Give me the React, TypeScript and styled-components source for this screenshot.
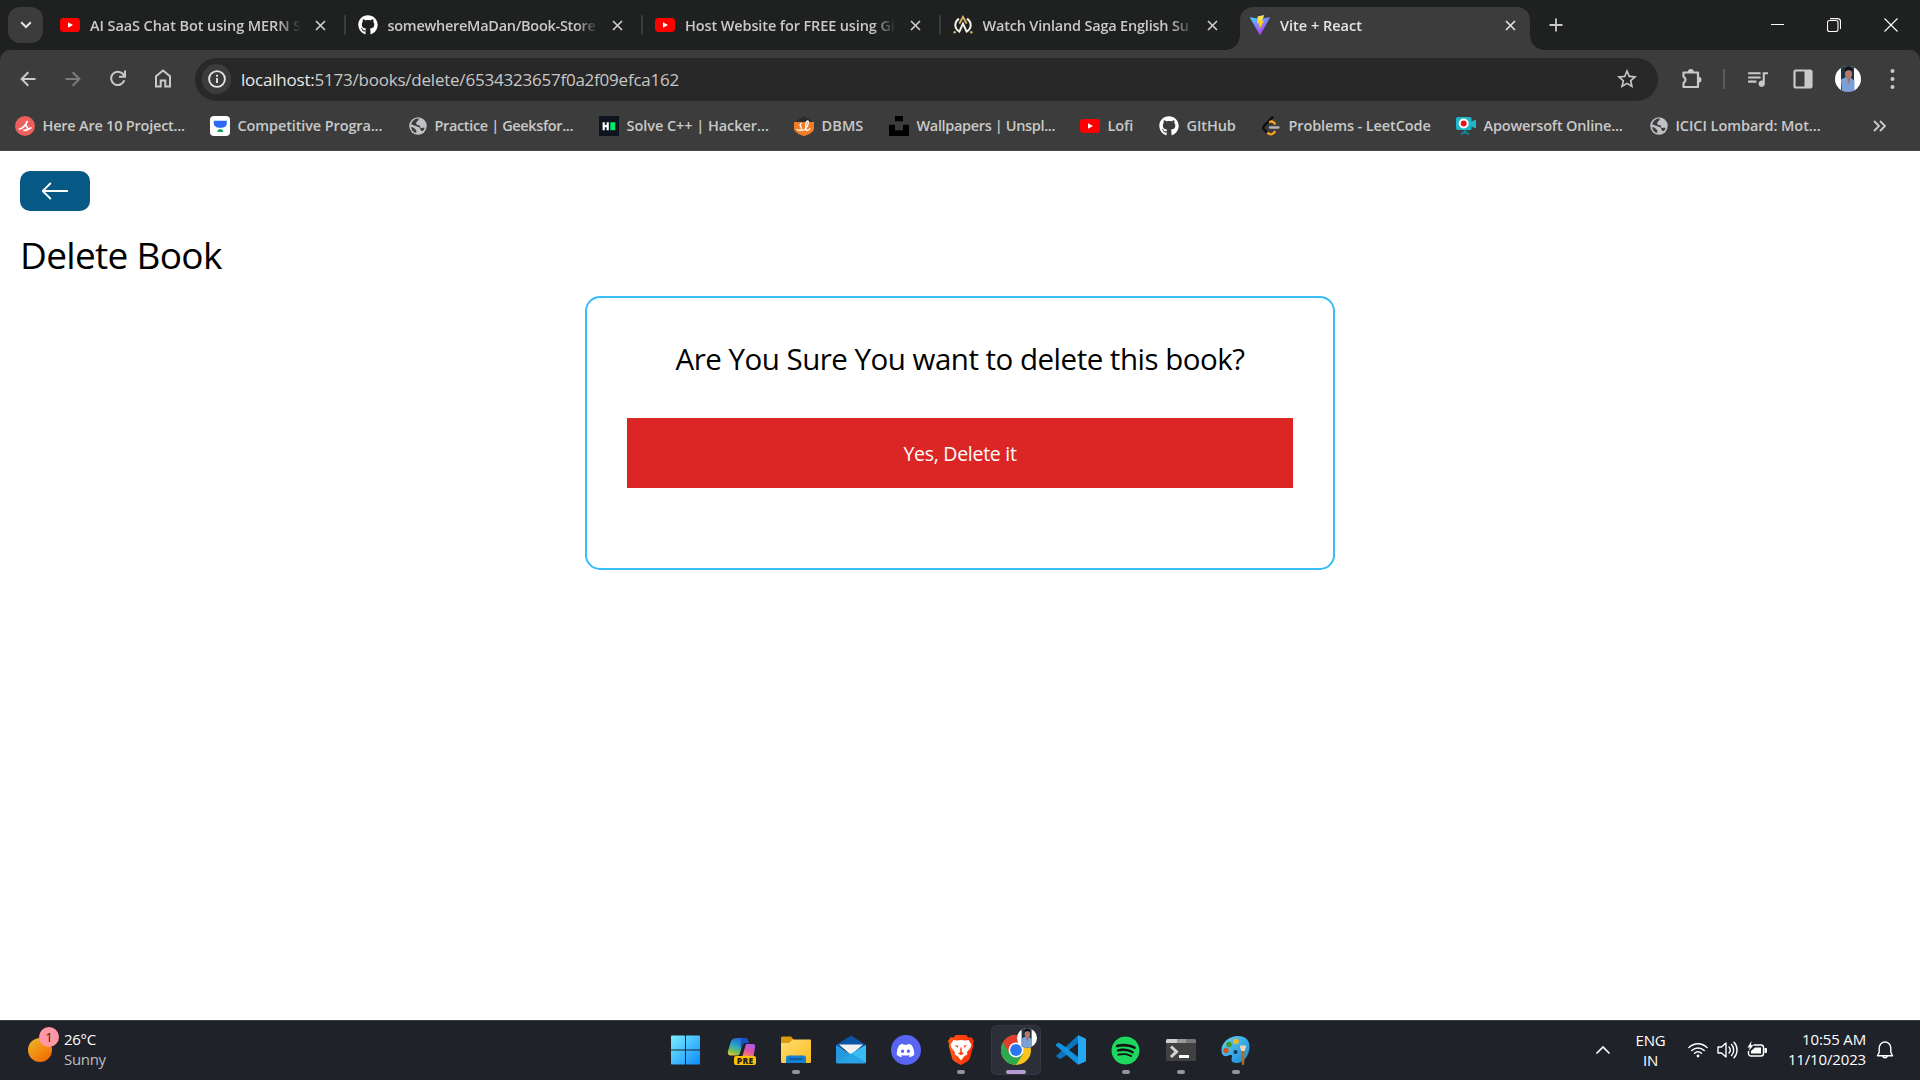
import React from "react";
import styled, { createGlobalStyle } from "styled-components";
import { BsArrowLeft } from "react-icons/bs";
import { FaGithub, FaDiscord, FaSpotify } from "react-icons/fa";
import { MdOutlineStarBorder, MdQueueMusic } from "react-icons/md";

const GlobalStyle = createGlobalStyle`
  * { box-sizing: border-box; }
  body {
    margin: 0;
    background: #fff;
    font-family: "Open Sans", "Noto Sans", sans-serif;
    overflow: hidden;
  }
  svg { display: block; flex: none; }
`;

const Screen = styled.div`
  display: flex;
  flex-direction: column;
  width: 1920px;
  height: 1080px;
`;

/* ---------- tab strip ---------- */

const TabStrip = styled.header`
  display: flex;
  flex: none;
  height: 50px;
  padding: 7px 0 0 8px;
  background: #1f2120;
`;

const TabSearch = styled.button`
  display: grid;
  place-items: center;
  width: 35px;
  height: 36px;
  margin-right: 7px;
  padding: 0;
  border: 0;
  border-radius: 12px;
  background: #3c3c3c;
`;

const Tab = styled.div<{ $active?: boolean }>`
  position: relative;
  display: flex;
  align-items: center;
  width: ${(p) => (p.$active ? 290 : 297.5)}px;
  height: 43px;
  padding: 0 ${(p) => (p.$active ? 9 : 2)}px 7px 10px;
  border-radius: 13px 13px 0 0;
  background: ${(p) => (p.$active ? "#3c3c3c" : "transparent")};
  color: ${(p) => (p.$active ? "#e6e6e6" : "#c9c9c9")};

  &::before,
  &::after {
    content: "";
    display: ${(p) => (p.$active ? "block" : "none")};
    position: absolute;
    bottom: 0;
    width: 14px;
    height: 14px;
  }
  &::before {
    left: -14px;
    background: radial-gradient(circle at 0 0, transparent 13.5px, #3c3c3c 14px);
  }
  &::after {
    right: -14px;
    background: radial-gradient(circle at 100% 0, transparent 13.5px, #3c3c3c 14px);
  }
`;

const TabTitle = styled.span<{ $tracking: number }>`
  flex: none;
  width: 212px;
  margin-left: 10px;
  padding-top: 2px;
  overflow: hidden;
  font-size: 14.5px;
  font-weight: 600;
  line-height: 20px;
  letter-spacing: ${(p) => p.$tracking}px;
  white-space: nowrap;
  mask-image: linear-gradient(to right, #000 188px, transparent 211px);
`;

const TabClose = styled.span`
  display: grid;
  flex: none;
  place-items: center;
  width: 20px;
  margin-left: 8px;
`;

const TabDivider = styled.span`
  width: 2px;
  height: 20px;
  margin-left: auto;
  border-radius: 1px;
  background: #3c3d3d;
`;

const NewTab = styled.span`
  display: grid;
  place-items: center;
  width: 51px;
  height: 36px;
`;

const WindowControls = styled.div`
  display: flex;
  margin-left: auto;
  height: 36px;
`;

const WindowButton = styled.span`
  display: grid;
  place-items: center;
  width: 57px;
  padding: 0 1px 1px 0;
`;

/* ---------- toolbar ---------- */

const ChromeBody = styled.div`
  flex: none;
  height: 101px;
  background: #1f2120;
`;

const ChromePanel = styled.div`
  display: flex;
  flex-direction: column;
  height: 101px;
  border-radius: 10px 10px 0 0;
  background: #3c3c3c;
  border-bottom: 1px solid #474747;
`;

const Toolbar = styled.div`
  display: flex;
  align-items: center;
  height: 58px;
`;

const NavButtons = styled.div`
  display: flex;
  width: 195px;
  padding-left: 5px;
`;

const ToolButton = styled.span<{ $w: number }>`
  display: grid;
  place-items: center;
  width: ${(p) => p.$w}px;
  height: 40px;
  padding-bottom: 1px;
`;

const Omnibox = styled.div`
  display: flex;
  align-items: center;
  width: 1463px;
  height: 43px;
  padding: 0 19px 0 7px;
  border-radius: 22px;
  background: #282828;
`;

const SiteInfo = styled.span`
  display: grid;
  place-items: center;
  width: 29px;
  height: 30px;
  border-radius: 15px;
  background: #3c3c3c;
`;

const Url = styled.span`
  flex: 1;
  margin-left: 10px;
  color: #c7c7c7;
  font-size: 17px;
  letter-spacing: -0.22px;
  white-space: nowrap;
`;

const UrlHost = styled.span`
  color: #e8e8e8;
`;

const Separator = styled.span`
  width: 2px;
  height: 20px;
  background: #5b5b5b;
`;

const ToolbarEnd = styled.div`
  display: flex;
  align-items: center;
  padding-left: 10px;
`;

const BookmarkBar = styled.nav`
  display: flex;
  align-items: center;
  height: 36px;
  padding-left: 15px;
`;

const Bookmark = styled.span<{ $w: number }>`
  display: flex;
  align-items: center;
  gap: 7.5px;
  width: ${(p) => p.$w}px;
`;

const BookmarkLabel = styled.span<{ $tracking: number }>`
  color: #c9c9c9;
  font-size: 14.5px;
  font-weight: 600;
  line-height: 20px;
  letter-spacing: ${(p) => p.$tracking}px;
  white-space: nowrap;
`;

/* ---------- page ---------- */

const Page = styled.main`
  flex: 1;
  padding: 20px;
  background: #fff;
`;

const BackButton = styled.button`
  display: grid;
  place-items: center;
  width: 70px;
  height: 40px;
  padding: 0;
  border: 0;
  border-radius: 10px;
  background: #075985;
  color: #fff;
`;

const Title = styled.h1`
  margin: 22px 0 19px;
  color: #000;
  font-size: 37px;
  font-weight: 400;
  line-height: 44px;
  letter-spacing: -0.68px;
`;

const Card = styled.section`
  display: flex;
  flex-direction: column;
  align-items: center;
  width: 750px;
  height: 274px;
  margin: 0 auto;
  padding: 40px;
  border: 2px solid #38bdf8;
  border-radius: 15px;
`;

const Question = styled.h3`
  margin: 1px 0 39px;
  color: #000;
  font-size: 29.5px;
  font-weight: 400;
  line-height: 40px;
  letter-spacing: -0.5px;
`;

const DeleteButton = styled.button`
  width: 100%;
  height: 70px;
  padding: 1px 0 0;
  border: 0;
  background: #dc2626;
  color: #fff;
  font-family: inherit;
  font-size: 19.5px;
  letter-spacing: -0.28px;
`;

/* ---------- taskbar ---------- */

const Taskbar = styled.footer`
  display: grid;
  grid-template-columns: 658px 607px 1fr;
  flex: none;
  height: 60px;
  border-top: 1px solid #3a4145;
  background: #20222a;
  color: #fff;
`;

const Weather = styled.div`
  display: flex;
  align-items: center;
  padding: 0 0 2px 28px;
`;

const Sun = styled.span`
  position: relative;
  width: 24px;
  height: 24px;
  border-radius: 50%;
  background: linear-gradient(145deg, #e9b92c, #f3890f 55%, #ec5f05);
`;

const Badge = styled.span`
  position: absolute;
  top: -11px;
  left: 11px;
  width: 20px;
  height: 20px;
  border-radius: 50%;
  background: #ff97a4;
  color: #1e1e24;
  font-size: 13px;
  line-height: 20px;
  text-align: center;
`;

const Lines = styled.div<{ $align?: string; $w?: number }>`
  display: flex;
  flex-direction: column;
  width: ${(p) => (p.$w ? p.$w + "px" : "auto")};
  text-align: ${(p) => p.$align ?? "left"};
  font-size: 15px;
  line-height: 20px;
  letter-spacing: -0.15px;
`;

const WeatherText = styled(Lines)`
  margin: -1px 0 0 12px;
  letter-spacing: -0.3px;
`;

const Dim = styled.span`
  color: #bcbdc1;
`;

const Apps = styled.div`
  display: flex;
`;

const AppSlot = styled.span<{ $active?: boolean }>`
  position: relative;
  display: grid;
  flex: none;
  place-items: center;
  width: ${(p) => (p.$active ? 50 : 55)}px;
  height: 50px;
  margin: 4px ${(p) => (p.$active ? "2px 0 3px" : "0 0")};
  border-radius: 6px;
  background: ${(p) => (p.$active ? "#2d2f38" : "transparent")};
  box-shadow: ${(p) => (p.$active ? "inset 0 0 0 1px #363841" : "none")};
`;

const Indicator = styled.span<{ $active?: boolean }>`
  position: absolute;
  bottom: 1px;
  width: ${(p) => (p.$active ? 20 : 8)}px;
  height: 4px;
  border-radius: 2px;
  background: ${(p) => (p.$active ? "#b79ad3" : "#94959a")};
`;

const ProfileBadge = styled.span`
  position: absolute;
  top: 3px;
  right: 4px;
`;

const Tint = styled.span<{ $color: string; $bg?: string; $size?: number }>`
  display: grid;
  place-items: center;
  width: ${(p) => (p.$size ? p.$size + "px" : "auto")};
  height: ${(p) => (p.$size ? p.$size + "px" : "auto")};
  border-radius: 50%;
  background: ${(p) => p.$bg ?? "transparent"};
  color: ${(p) => p.$color};
`;

const Tray = styled.div`
  display: flex;
  align-items: center;
  justify-content: flex-end;
  padding: 0 26px 1px 0;
`;

const Language = styled(Lines)`
  margin: -1px 0 0 20px;
`;

const TrayIcons = styled.div`
  display: flex;
  align-items: center;
  gap: 9px;
  margin: 0 15px 0 17px;
`;

const Bell = styled.span`
  margin-left: 10px;
`;

const Clock = styled(Lines)`
  margin-top: -3px;
`;

/* ---------- icons ---------- */

const line = (color: string, w = 2) => ({ fill: "none", stroke: color, strokeWidth: w });

const YouTube = () => (
  <svg width="20" height="20" viewBox="0 0 20 20">
    <rect y="3" width="20" height="14" rx="3.4" fill="#f00" />
    <path d="M8 7.2v5.6l5-2.8z" fill="#fff" />
  </svg>
);

const Close = ({ color = "#d0d0d0" }: { color?: string }) => (
  <svg width="11" height="11" viewBox="0 0 11 11" {...line(color, 1.6)}>
    <path d="M1 1l9 9M10 1l-9 9" />
  </svg>
);

const Aniwave = () => (
  <svg width="20" height="20" viewBox="0 0 22 20" fill="none">
    <path d="M6.500 3C.8 7.500 1.500 14 7 17.200L11 8.500l4 8.700c5.500-3.200 6.200-9.700.5-14.200" stroke="#f4f1e8" strokeWidth="2.200" />
    <path d="M7 8.500l4-7.500 4 7.500" stroke="#dcb968" strokeWidth="2" />
    <circle cx="1.800" cy="18" r="1.300" fill="#dcb968" />
    <circle cx="20.200" cy="18" r="1.300" fill="#dcb968" />
  </svg>
);

const Vite = () => (
  <svg width="20" height="20" viewBox="0 0 20 20">
    <defs>
      <linearGradient id="vA" x1="0" y1="0" x2=".6" y2="1">
        <stop offset="0" stopColor="#41d1ff" />
        <stop offset="1" stopColor="#bd34fe" />
      </linearGradient>
      <linearGradient id="vB" x1="0" y1="0" x2="0" y2="1">
        <stop offset="0" stopColor="#ffea83" />
        <stop offset=".3" stopColor="#ffdd35" />
        <stop offset="1" stopColor="#ffa800" />
      </linearGradient>
    </defs>
    <path d="M19.8 3.1L10.5 19.6a.6.6 0 01-1 0L.1 3.1a.6.6 0 01.6-.9l9.3 1.7 9.2-1.7a.6.6 0 01.6.9z" fill="url(#vA)" />
    <path d="M14.4.1L7.6 1.4l-.5 7.2 2.1-.4-.7 3.2 1.5-.4-.9 4.6 5-9.9-2.3.4z" fill="url(#vB)" />
  </svg>
);

const Globe = () => (
  <svg width="18" height="20" viewBox="0 0 19 20">
    <circle cx="9.5" cy="10" r="9.2" fill="#bfc1c5" />
    <path d="M10.500 2.200c-.8 1.500-.3 2.300-1.700 2.800S7.500 7 8 8.300c.4.900 2.500.2 3.300 1.200s-.2 1.600 1 2.300 2.700-.4 4.200.2c-.4 1.300-1 2.300-2 3.200-1.500.3-2.500-.5-2.500-2s-1.500-2-3-2.500S5.500 9.500 4.300 9 2.600 8 2.300 8.500A7.500 7.500 0 0110.500 2.200z" fill="#3c3c3c" />
    <path d="M2.200 11c1.500.2 3.300.8 4 2s1.800 1 1.600 2.500-.3 1.500 0 2A7.500 7.500 0 012.200 11z" fill="#3c3c3c" />
  </svg>
);

const ScriptMark = () => (
  <svg width="20" height="20" viewBox="0 0 20 20">
    <circle cx="10" cy="10" r="10" fill="#ec5f5c" />
    <path d="M4.500 13c3 0 6.500-4.500 8-8-2.500 3-2 4.500-.5 6s0 4-3 3.300M13 13.500l3-1.700" {...line("#fff", 1.7)} strokeLinecap="round" />
  </svg>
);

const Unstop = () => (
  <svg width="20" height="20" viewBox="0 0 20 20">
    <rect width="20" height="20" rx="4" fill="#fff" />
    <path d="M3.800 4.700h13v2.500c0 3-2.500 4.600-6.500 4.600S3.800 10 3.800 7.200z" fill="#2b6bf3" />
    <path d="M7.300 16c.3-2 1.300-2.900 3-2.900s2.700.9 3 2.900z" fill="#12a85b" />
  </svg>
);

const HackerRank = () => (
  <svg width="20" height="20" viewBox="0 0 20 20">
    <rect width="20" height="20" fill="#0e141e" />
    <path d="M4.700 6.200v8M8.700 6.200v8M4.700 10.200h4" {...line("#fff", 2.200)} />
    <rect x="11.300" y="6.200" width="5" height="8" fill="#00ea64" />
  </svg>
);

const DbmsIcon = () => (
  <svg width="20" height="20" viewBox="0 0 20 20">
    <path d="M1 5.500L10 0l9 5.500z" fill="#2c2c2e" />
    <path d="M0 6h20v7c0 2.500-5 6-10 7-5-1-10-4.500-10-7z" fill="#f07c28" />
    <path d="M3 13.500c2.500 1.500 5 .5 4.500-1.500s-3-2.500-.5-4.500M8 14.500c3.500 0 6-4.500 6.300-7.500s-1.600-2.500-2.200 0-1 7.500.6 7.500 2.300-.5 3.300-1.800" {...line("#fff", 1.300)} strokeLinecap="round" />
  </svg>
);

const Unsplash = () => (
  <svg width="20" height="20" viewBox="0 0 20 20">
    <path d="M6 0h8v5.300H6zM0 8.700h6v5.600h8V8.700h6V20H0z" fill="#000" />
  </svg>
);

const LeetCode = () => (
  <svg width="19" height="20" viewBox="0 0 19 20" fill="none" strokeWidth="2.300" strokeLinecap="round">
    <path d="M10.500 1.300L2.300 9.600c-1.300 1.400-1.300 2.800 0 4.200l2.500 2.500" stroke="#0c0c0c" />
    <path d="M6 17.200c1.800 1.600 4.200 1.400 5.600-.3l1.200-1.200M8 5.800c1.300-.6 2.600-.3 3.600.6l1.200 1.200" stroke="#ffa116" />
    <path d="M8 11.500h8.500" stroke="#b3b3b3" />
  </svg>
);

const Apowersoft = () => (
  <svg width="20" height="20" viewBox="0 0 20 20">
    <path d="M2 1h12a1.500 1.500 0 011.500 1.500v3L20 3.500v9l-4.500-2v2A1.500 1.500 0 0114 14H2a2 2 0 01-2-2V3a2 2 0 012-2z" fill="#1fb6c9" />
    <circle cx="7.700" cy="7.500" r="5" fill="#fff" />
    <circle cx="7.700" cy="7.500" r="3" fill="#e5141c" />
    <path d="M5 18.500l4-3.500 4 3.500M9 15v3" {...line("#177f8e", 2)} />
  </svg>
);

const Avatar = ({ size }: { size: number }) => (
  <svg width={size} height={size} viewBox="0 0 26 26">
    <defs>
      <clipPath id={"av" + size}>
        <circle cx="13" cy="13" r="13" />
      </clipPath>
    </defs>
    <g clipPath={`url(#av${size})`}>
      <rect width="26" height="26" fill="#fff" />
      <rect x="6" width="13" height="26" fill="#1d3540" />
      <path d="M6 13.500l5-2.500h4l4.500 4v11H7z" fill="#7c9fd6" />
      <path d="M12 11l1.500 7 2-6z" fill="#a86a5c" />
      <ellipse cx="13.500" cy="7.800" rx="3.500" ry="4.600" fill="#b5776a" />
      <path d="M9.700 6C9.500 2 11 .5 13.500.5S18 2 17.200 6c-1-2-5-2.500-7.500 0z" fill="#15131a" />
    </g>
  </svg>
);

const Copilot = () => (
  <svg width="30" height="30" viewBox="-2 1 30 30">
    <defs>
      <linearGradient id="cpA" x1=".6" y1="0" x2=".2" y2="1">
        <stop offset="0" stopColor="#1c62d8" />
        <stop offset=".45" stopColor="#2aa5c9" />
        <stop offset=".8" stopColor="#7cc04c" />
        <stop offset="1" stopColor="#e8c637" />
      </linearGradient>
      <linearGradient id="cpB" x1=".6" y1="0" x2=".3" y2="1">
        <stop offset="0" stopColor="#a75bea" />
        <stop offset=".6" stopColor="#e2559e" />
        <stop offset="1" stopColor="#f78463" />
      </linearGradient>
    </defs>
    <path d="M9 4h8c2 0 3 1.500 3.700 5H17c-1.500 0-2.500 1-3 3l-2 7c-.5 1.500-1.300 2.500-2.500 2.500H3c-2.700 0-3.700-2-3-4.500l3-10C4 5 6.500 4 9 4z" fill="url(#cpA)" />
    <path d="M13.500 4H17c2 0 3 1.500 3.700 5H17c-1.500 0-2.500 1-3 3l-2 2z" fill="#1d4fc4" />
    <path d="M18 10h6.500c2.500 0 3 1.500 2.500 4l-1.500 8H14.500z" fill="url(#cpB)" />
    <rect x="6" y="22" width="22" height="9" rx="2" fill="#ffc107" />
    <text x="17.200" y="29.600" textAnchor="middle" fontFamily="Open Sans" fontSize="8.500" fontWeight="800" letterSpacing=".4" fill="#1b1b1b">PRE</text>
  </svg>
);

const WindowsIcon = () => (
  <svg width="30" height="30" viewBox="0 0 30 30">
    <defs>
      <linearGradient id="win" gradientUnits="userSpaceOnUse" x1="0" y1="0" x2="29" y2="29">
        <stop offset="0" stopColor="#7df0ff" />
        <stop offset="1" stopColor="#0c8cf9" />
      </linearGradient>
    </defs>
    <path d="M1 .5H14v14H0v-13a1 1 0 011-1zM15 .5h13a1 1 0 011 1v13h-14zM0 15.500h14v14h-13a1 1 0 01-1-1zM15 15.500h14v13a1 1 0 01-1 1h-13z" fill="url(#win)" />
  </svg>
);

const Explorer = () => (
  <svg width="30" height="28" viewBox="0 0 30 28">
    <defs>
      <linearGradient id="exA" x1="0" y1="0" x2="1" y2="1">
        <stop offset="0" stopColor="#ffdf72" />
        <stop offset="1" stopColor="#fbba1e" />
      </linearGradient>
    </defs>
    <path d="M0 2a1.500 1.500 0 011.500-1.500h8.500l3 3.500v6H0z" fill="#dc9a0c" />
    <path d="M0 7h8l4-3.500h17a1 1 0 011 1V26a1 1 0 01-1 1H1a1 1 0 01-1-1z" fill="url(#exA)" />
    <path d="M5 27v-5a2.500 2.500 0 012.500-2.500h15A2.500 2.500 0 0125 22v5z" fill="#137fd0" />
    <path d="M8.500 23h13" {...line("#0a4c8c", 1.300)} />
  </svg>
);

const Mail = () => (
  <svg width="30" height="30" viewBox="0 0 30 30">
    <path d="M0 10L15 .5 30 10v4H0z" fill="#0a56a5" />
    <path d="M3 9.500h24L15 20z" fill="#f2f2f2" />
    <path d="M0 10l15 9.500L30 10v17a1.500 1.500 0 01-1.500 1.500h-27A1.500 1.500 0 010 27z" fill="#2599e0" />
    <path d="M15 18.500L30 10v17.500z" fill="#38bdf3" />
    <path d="M.5 28l14.500-9.500L29.500 28z" fill="#27a3e6" />
  </svg>
);

const Brave = () => (
  <svg width="28" height="30" viewBox="0 0 28 30">
    <defs>
      <linearGradient id="br" x1="0" y1="0" x2="1" y2="0">
        <stop offset="0" stopColor="#ff5a17" />
        <stop offset="1" stopColor="#ff2a05" />
      </linearGradient>
    </defs>
    <path d="M9 0h10l2.500 2.500 3-.2L27 6l-1 3 .3 2-3.500 12.500c-.5 1.800-2 3-8.800 6.500-6.800-3.500-8.300-4.700-8.800-6.500L1.700 11 2 9 1 6l2.500-3.700 3 .2z" fill="url(#br)" />
    <path d="M6.500 5l3.500.6L14 5l4 .6 3.500-.6 3 4.500-1 3.500-3.500 4 .3 2.500-2.800 1.500-3.500 4.500-3.500-4.500-2.800-1.500.3-2.500-3.500-4-1-3.500z" fill="#fff" />
    <path d="M7.500 10l4 .8-.8 2zM20.500 10l-4 .8.800 2zM13.300 12.500h1.400l.1 4.500 2.200 1.500L14 20.300l-3-1.800 2.200-1.500z" fill="#ff4512" />
  </svg>
);

const Chrome = () => (
  <svg width="30" height="30" viewBox="0 0 30 30">
    <circle cx="15" cy="15" r="15" fill="#fcc31e" />
    <path d="M15 15L2 7.500A15 15 0 0015 30l7-11z" fill="#2da94f" />
    <path d="M15 8h13.300A15 15 0 002 7.500L9 19z" fill="#e33b2e" />
    <circle cx="15" cy="15" r="7.500" fill="#fff" />
    <circle cx="15" cy="15" r="5.900" fill="#2a76f0" />
  </svg>
);

const VSCode = () => (
  <svg width="30" height="30" viewBox="0 0 30 30">
    <path d="M22 .3L29 3.500 29 8 4 24.300 0 21z" fill="#0a74bf" />
    <path d="M2.500 7.500L0 9.500v1.200L22 29.700 24 21z" fill="#1390dc" />
    <path d="M22 .3l7 2.900a1.500 1.500 0 011 1.400v20.800a1.500 1.500 0 01-1 1.400l-7 2.900z" fill="#27a7f2" />
    <path d="M22 8v14l-9-7z" fill="#20222a" />
  </svg>
);

const Terminal = () => (
  <svg width="30" height="30" viewBox="0 0 30 30">
    <rect y="4" width="30" height="22" rx="1.500" fill="#414141" />
    <path d="M0 8V5.500A1.500 1.500 0 011.500 4H11v4z" fill="#cfcfcf" />
    <path d="M11 4h9v4h-9z" fill="#999" />
    <path d="M20 4h8.500A1.500 1.500 0 0130 5.500V8H20z" fill="#777" />
    <path d="M5 11.500l5.500 5.200L5 22" {...line("#d4d4d4", 3)} />
    <path d="M13 21.500h10" {...line("#fff", 3)} />
  </svg>
);

const Paint = () => (
  <svg width="30" height="30" viewBox="0 0 30 30">
    <defs>
      <linearGradient id="pt" x1="0" y1="0" x2="1" y2="1">
        <stop offset="0" stopColor="#63d3f6" />
        <stop offset="1" stopColor="#1585d6" />
      </linearGradient>
    </defs>
    <path d="M17 1c7 0 11.500 4 11.500 10.500 0 9-6 16.500-13 16.500-5 0-5.500-3-4.500-6 .6-2-1-2.500-3.500-1.500C3.500 22.500.5 20 .5 15.500.5 7.500 8 1 17 1z" fill="url(#pt)" />
    <circle cx="15" cy="6.500" r="2.700" fill="#f5b81f" />
    <circle cx="8" cy="9.500" r="2.700" fill="#3f9c1d" />
    <circle cx="5" cy="15.500" r="2.700" fill="#d05525" />
    <circle cx="14.500" cy="17" r="2" fill="#15375c" />
    <path d="M20.500 16h3l-.3 13a1.200 1.200 0 01-2.400 0z" fill="#b36a1d" />
    <path d="M19 10.500c0 3 1 4 1.500 5.500h3c.5-1.500 1.500-2.500 1.500-5.500z" fill="#f4d8ae" />
  </svg>
);

/* ---------- data ---------- */

const gh = <Tint $color="#fff"><FaGithub size={20} /></Tint>;

const tabs = [
  { title: "AI SaaS Chat Bot using MERN S", icon: <YouTube />, tracking: -0.09 },
  { title: "somewhereMaDan/Book-Store", icon: gh, tracking: -0.28 },
  { title: "Host Website for FREE using Gi", icon: <YouTube />, tracking: -0.12 },
  { title: "Watch Vinland Saga English Su", icon: <Aniwave />, tracking: -0.2 },
];

const bookmarks: [string, React.ReactNode, number, number][] = [
  ["Here Are 10 Project...", <ScriptMark />, 195, -0.22],
  ["Competitive Progra...", <Unstop />, 199, -0.12],
  ["Practice | Geeksfor...", <Globe />, 190, -0.36],
  ["Solve C++ | Hacker...", <HackerRank />, 195, -0.05],
  ["DBMS", <DbmsIcon />, 95, 0.1],
  ["Wallpapers | Unspl...", <Unsplash />, 191, -0.35],
  ["Lofi", <YouTube />, 79, -0.1],
  ["GItHub", gh, 103, -0.1],
  ["Problems - LeetCode", <LeetCode />, 194, -0.11],
  ["Apowersoft Online...", <Apowersoft />, 194, -0.18],
  ["ICICI Lombard: Mot...", <Globe />, 223, -0.06],
];

const apps: { icon: React.ReactNode; running?: boolean; active?: boolean }[] = [
  { icon: <WindowsIcon /> },
  { icon: <Copilot /> },
  { icon: <Explorer />, running: true },
  { icon: <Mail /> },
  { icon: <Tint $color="#fff" $bg="#5865f2" $size={30}><FaDiscord size={19} /></Tint> },
  { icon: <Brave />, running: true },
  { icon: <Chrome />, running: true, active: true },
  { icon: <VSCode /> },
  { icon: <Tint $color="#1ed760" $bg="#10130f" $size={29}><FaSpotify size={29} /></Tint>, running: true },
  { icon: <Terminal />, running: true },
  { icon: <Paint />, running: true },
];

const ic = "#c9c9c9";

export default function App() {
  return (
    <Screen>
      <GlobalStyle />
      <TabStrip>
        <TabSearch>
          <svg width="12" height="8" viewBox="0 0 12 8" {...line("#e3e3e3")}><path d="M1.200 1.200L6 6l4.800-4.800" /></svg>
        </TabSearch>
        {tabs.map((t, i) => (
          <Tab key={t.title}>
            {t.icon}
            <TabTitle $tracking={t.tracking}>{t.title}</TabTitle>
            <TabClose><Close /></TabClose>
            {i < 3 && <TabDivider />}
          </Tab>
        ))}
        <Tab $active>
          <Vite />
          <TabTitle $tracking={0}>Vite + React</TabTitle>
          <TabClose><Close color="#e3e3e3" /></TabClose>
        </Tab>
        <NewTab>
          <svg width="14" height="14" viewBox="0 0 14 14" {...line("#c9c9c9", 1.8)}><path d="M7 .5v13M.5 7h13" /></svg>
        </NewTab>
        <WindowControls>
          <WindowButton><svg width="13" height="2" viewBox="0 0 13 2"><path d="M0 .5h13" {...line("#fff", 1)} /></svg></WindowButton>
          <WindowButton>
            <svg width="14" height="14" viewBox="0 0 14 14" {...line("#fff", 1.1)}><rect x=".5" y="2.500" width="10.500" height="11" rx="2" /><path d="M3 .6h7.500a3 3 0 013 3V11" /></svg>
          </WindowButton>
          <WindowButton>
            <svg width="14" height="14" viewBox="0 0 14 14" {...line("#fff", 1.1)}><path d="M.5.5l13 13M13.500.5l-13 13" /></svg>
          </WindowButton>
        </WindowControls>
      </TabStrip>

      <ChromeBody>
        <ChromePanel>
          <Toolbar>
            <NavButtons>
              <ToolButton $w={45}><svg width="16" height="16" viewBox="0 0 16 16" {...line(ic)}><path d="M15.500 8H2M8.300 1.300L1.600 8l6.700 6.700" /></svg></ToolButton>
              <ToolButton $w={45}><svg width="16" height="16" viewBox="0 0 16 16" {...line("#7b7b7b")}><path d="M.5 8H14M7.700 1.300L14.400 8l-6.700 6.700" /></svg></ToolButton>
              <ToolButton $w={45}>
                <svg width="16" height="17" viewBox="0 0 16 17" {...line(ic)}><path d="M14.300 10.300A6.700 6.700 0 1113 4l1.800 2" /><path d="M15 .5V6.700H9" /></svg>
              </ToolButton>
              <ToolButton $w={45}>
                <svg width="18" height="19" viewBox="0 0 18 19" {...line(ic)}><path d="M2 7.200L9 1.500l7 5.700V17.500h-4.700v-6H6.700v6H2z" /></svg>
              </ToolButton>
            </NavButtons>
            <Omnibox>
              <SiteInfo>
                <svg width="18" height="18" viewBox="0 0 18 18" {...line("#e3e3e3", 1.9)}><circle cx="9" cy="9" r="7.900" /><path d="M9 8v5M9 4.700v2" /></svg>
              </SiteInfo>
              <Url><UrlHost>localhost:</UrlHost>5173/books/delete/6534323657f0a2f09efca162</Url>
              <Tint $color={ic}><MdOutlineStarBorder size={24} /></Tint>
            </Omnibox>
            <ToolbarEnd>
              <ToolButton $w={47}>
                <svg width="22" height="22" viewBox="0 0 22 22">
                  <path d="M2.500 4.500h14.500v14.500H2.500v-4.300a3.200 3.200 0 000-5.900z" {...line(ic, 2.2)} strokeLinejoin="round" />
                  <path d="M6.800 4a3 3 0 016 0zM17.500 8.700a3 3 0 010 6z" fill={ic} />
                </svg>
              </ToolButton>
              <ToolButton $w={18}><Separator /></ToolButton>
              <ToolButton $w={49}><Tint $color={ic}><MdQueueMusic size={25} /></Tint></ToolButton>
              <ToolButton $w={41}>
                <svg width="20" height="20" viewBox="0 0 20 20"><rect x="1.500" y="1.500" width="17" height="17" rx="1.500" {...line(ic, 2.2)} /><path d="M11.500 1h7v18h-7z" fill={ic} /></svg>
              </ToolButton>
              <ToolButton $w={49}><Avatar size={26} /></ToolButton>
              <ToolButton $w={41}>
                <svg width="5" height="22" viewBox="0 0 5 22" fill={ic}><circle cx="2.500" cy="3" r="2" /><circle cx="2.500" cy="11" r="2" /><circle cx="2.500" cy="19" r="2" /></svg>
              </ToolButton>
            </ToolbarEnd>
          </Toolbar>
          <BookmarkBar>
            {bookmarks.map(([label, icon, w, tracking]) => (
              <Bookmark key={label} $w={w}>
                {icon}
                <BookmarkLabel $tracking={tracking}>{label}</BookmarkLabel>
              </Bookmark>
            ))}
            <svg width="13" height="12" viewBox="0 0 13 12" {...line(ic, 1.9)}><path d="M1 1l5 5-5 5M7 1l5 5-5 5" /></svg>
          </BookmarkBar>
        </ChromePanel>
      </ChromeBody>

      <Page>
        <BackButton><BsArrowLeft size={30} /></BackButton>
        <Title>Delete Book</Title>
        <Card>
          <Question>Are You Sure You want to delete this book?</Question>
          <DeleteButton>Yes, Delete it</DeleteButton>
        </Card>
      </Page>

      <Taskbar>
        <Weather>
          <Sun><Badge>1</Badge></Sun>
          <WeatherText><span>26°C</span><Dim>Sunny</Dim></WeatherText>
        </Weather>
        <Apps>
          {apps.map((a, i) => (
            <AppSlot key={i} $active={a.active}>
              {a.icon}
              {a.active && <ProfileBadge><Avatar size={20} /></ProfileBadge>}
              {a.running && <Indicator $active={a.active} />}
            </AppSlot>
          ))}
        </Apps>
        <Tray>
          <svg width="14" height="8" viewBox="0 0 14 8" {...line("#fff", 1.7)} strokeLinecap="round"><path d="M1 7l6-6 6 6" /></svg>
          <Language $align="center" $w={41}><span>ENG</span><span>IN</span></Language>
          <TrayIcons>
            <svg width="20" height="16" viewBox="0 0 20 16" {...line("#fff", 1.5)} strokeLinecap="round">
              <path d="M1 5.500a12.700 12.700 0 0118 0M3.800 8.500a8.800 8.800 0 0112.400 0M6.600 11.200a4.800 4.800 0 016.800 0" /><circle cx="10" cy="14" r="1.400" fill="#fff" stroke="none" />
            </svg>
            <svg width="21" height="18" viewBox="0 0 21 18" {...line("#fff", 1.4)} strokeLinecap="round" strokeLinejoin="round">
              <path d="M1 6h3.500L9 2v14l-4.500-4H1zM12 6a4.500 4.500 0 010 6M14.500 3.500a8 8 0 010 11M17 1.200a11.500 11.500 0 010 15.600" />
            </svg>
            <svg width="21" height="18" viewBox="0 0 21 18">
              <path d="M6.500 4H14a2.500 2.500 0 012.500 2.500v6A2.500 2.500 0 0114 15H4a2.500 2.500 0 01-2.500-2.500V10" {...line("#fff", 1.4)} />
              <path d="M8 6.500h6v6H4V10zM17.500 7h1.500a1 1 0 011 1v3a1 1 0 01-1 1h-1.500zM4.500 0L.5 6.500h2.300L1.800 10 6.500 4H4z" fill="#fff" />
            </svg>
          </TrayIcons>
          <Clock $align="right" $w={83}><span>10:55 AM</span><span>11/10/2023</span></Clock>
          <Bell>
            <svg width="18" height="19" viewBox="0 0 18 19" {...line("#fff", 1.4)} strokeLinejoin="round">
              <path d="M9 1a5.800 5.800 0 015.800 5.800v4.500l1.700 3.500h-15l1.700-3.500V6.800A5.800 5.800 0 019 1zM6.700 15a2.400 2.400 0 004.600 0" />
            </svg>
          </Bell>
        </Tray>
      </Taskbar>
    </Screen>
  );
}
